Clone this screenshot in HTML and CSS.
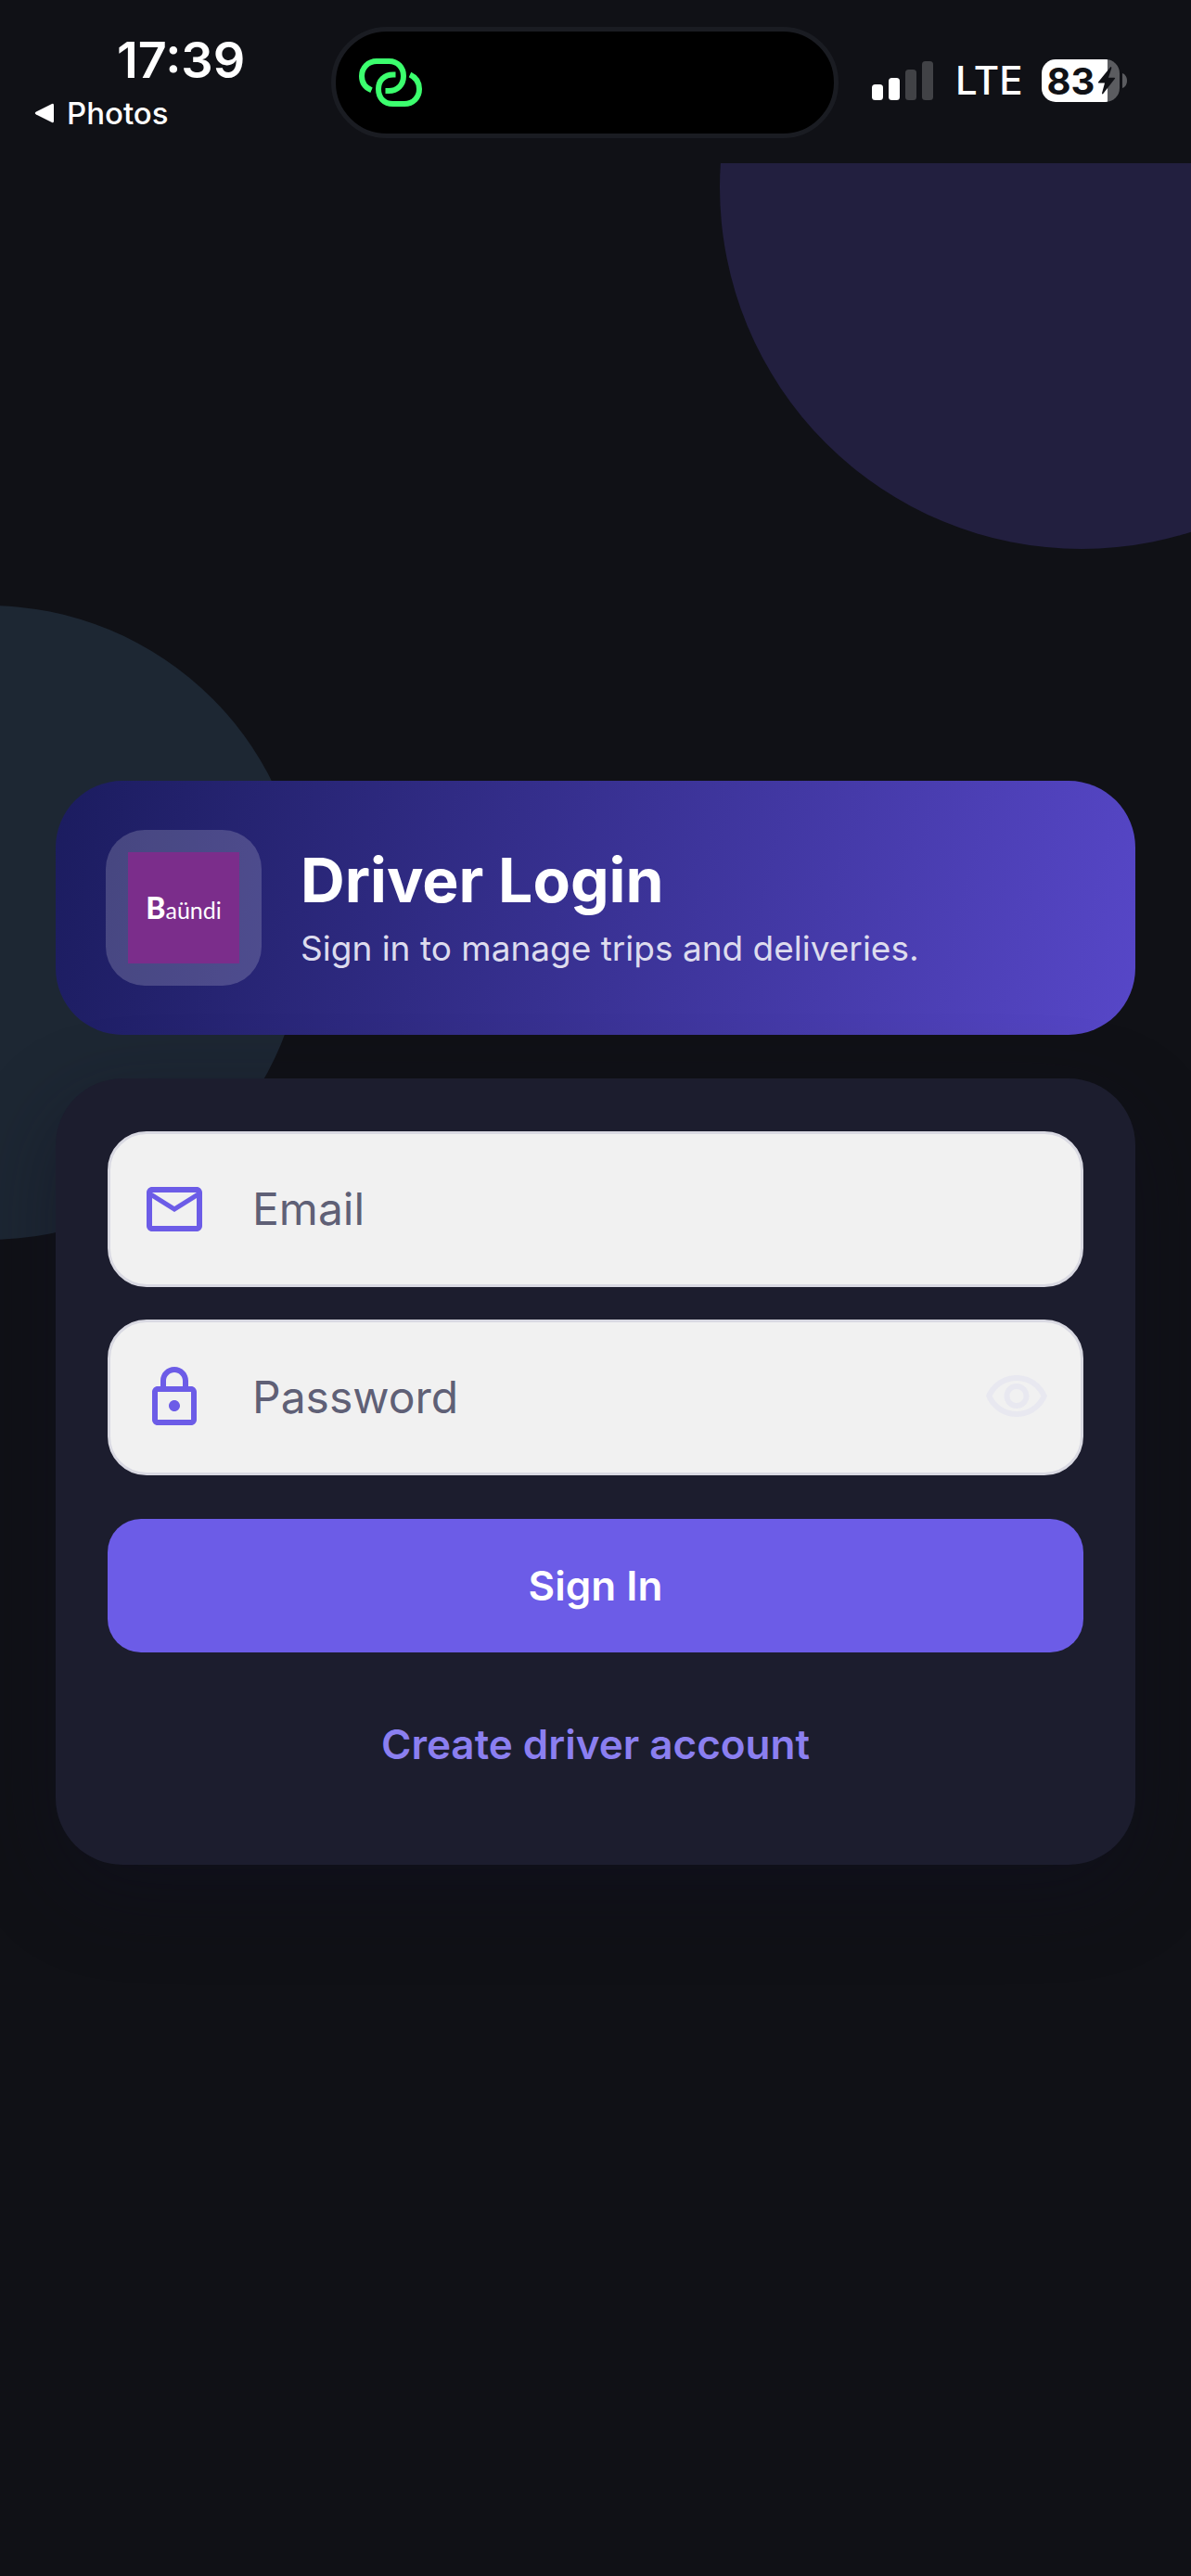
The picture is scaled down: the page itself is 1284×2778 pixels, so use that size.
FILE: index.html
```html
<!DOCTYPE html>
<html lang="en">
<head>
    <meta charset="UTF-8">
    <meta name="viewport" content="width=device-width, initial-scale=1.0">
    <title>Driver Login</title>
    <link rel="stylesheet" href="styles.css">
</head>
<body>
    <header class="status-bar">
        <div class="status-left">
            <div class="status-time">17:39</div>
            <a class="status-back" href="#">
                <svg width="24" height="24" viewBox="0 0 24 24"><path d="M3 10.500 20 2q2-1 2 1.500v17q0 2.500-2 1.500L3 13.500q-2.500-1.500 0-3z" fill="#fff"/></svg>
                Photos
            </a>
        </div>
        <div class="island">
            <svg width="68" height="52" viewBox="0 0 68 52" fill="none" stroke="#3cff6e" stroke-width="6">
                <path d="M13.500 34.300C7 31.500 3 26 3 19 3 10 10 3 19 3h13.500C42 3 48 10 48 19c0 9.500-6.500 16-16 16h-3.500"/>
                <path d="M39.500 17.500H37C27 17.500 21 24 21 33c0 9.500 6 16 15.500 16H49c9.500 0 16-7 16-16 0-7-3.500-12.500-10-15.500"/>
            </svg>
        </div>
        <div class="status-right">
            <svg width="66" height="42" viewBox="0 0 66 42">
                <rect x="0" y="25" width="12" height="17" rx="3.500" fill="#fff"/>
                <rect x="18" y="18" width="12" height="24" rx="3.500" fill="#fff"/>
                <rect x="36" y="9" width="12" height="33" rx="3.500" fill="#414246"/>
                <rect x="54" y="0" width="12" height="42" rx="3.500" fill="#414246"/>
            </svg>
            <span class="network">LTE</span>
            <div class="battery">
                <span class="battery-level">83</span>
                <svg class="bolt" width="20" height="30" viewBox="0 0 20 30"><path d="M14 .500 1 16.500q-.7 1 .6 1H8L5 28.500q0 1.700 1.300.6L19 12.800q.6-1-.6-1H12L15.300 1.500Q15.300-.6 14 .500z" fill="#101116"/></svg>
                <svg class="battery-cap" width="5" height="16" viewBox="0 0 5 16"><path d="M0 0c3 1 5 4 5 8s-2 7-5 8z" fill="#5b5c60"/></svg>
            </div>
        </div>
    </header>

    <main class="screen">
        <div class="circle circle-top"></div>
        <div class="circle circle-left"></div>

        <section class="hero">
            <div class="logo">
                <div class="logo-mark"><b>B</b>aündi</div>
            </div>
            <div class="hero-text">
                <h1>Driver Login</h1>
                <p>Sign in to manage trips and deliveries.</p>
            </div>
        </section>

        <form class="card">
            <label class="field">
                <svg class="icon" viewBox="0 0 24 24"><path d="M22 6c0-1.100-.9-2-2-2H4c-1.100 0-2 .9-2 2v12c0 1.100.9 2 2 2h16c1.100 0 2-.9 2-2V6zm-2 0l-8 5-8-5h16zm0 12H4V8l8 5 8-5v10z"/></svg>
                <input type="email" placeholder="Email" aria-label="Email">
            </label>
            <div class="field">
                <svg class="icon" viewBox="0 0 24 24"><path d="M18 8h-1V6c0-2.760-2.240-5-5-5S7 3.240 7 6v2H6c-1.100 0-2 .9-2 2v10c0 1.100.9 2 2 2h12c1.100 0 2-.9 2-2V10c0-1.100-.9-2-2-2zM9 6c0-1.660 1.340-3 3-3s3 1.340 3 3v2H9V6zm9 14H6V10h12v10zm-6-3c1.100 0 2-.9 2-2s-.9-2-2-2-2 .9-2 2 .9 2 2 2z"/></svg>
                <input type="password" placeholder="Password" aria-label="Password">
                <button class="toggle" type="button" aria-label="Show password">
                    <svg class="icon" viewBox="0 0 24 24"><path d="M12 6c3.790 0 7.170 2.130 8.820 5.500C19.170 14.870 15.790 17 12 17s-7.170-2.130-8.820-5.500C4.830 8.130 8.210 6 12 6m0-2C7 4 2.730 7.110 1 11.500 2.730 15.890 7 19 12 19s9.270-3.110 11-7.500C21.270 7.110 17 4 12 4zm0 5c1.380 0 2.500 1.120 2.500 2.500S13.380 14 12 14s-2.500-1.120-2.500-2.500S10.620 9 12 9m0-2c-2.480 0-4.500 2.020-4.500 4.500S9.520 16 12 16s4.500-2.020 4.500-4.500S14.480 7 12 7z"/></svg>
                </button>
            </div>
            <button class="btn-primary" type="submit">Sign In</button>
            <a class="btn-link" href="#">Create driver account</a>
        </form>
    </main>
</body>
</html>
```
FILE: styles.css
```css
* {
    margin: 0;
    padding: 0;
    box-sizing: border-box;
}

body {
    display: flex;
    flex-direction: column;
    min-height: 100vh;
    background: #101116;
    color: #ffffff;
    font-family: Inter, 'Liberation Sans', sans-serif;
}

svg {
    display: block;
    flex-shrink: 0;
}

a {
    text-decoration: none;
}

/* Status bar */
.status-bar {
    display: flex;
    align-items: flex-start;
    height: 176px;
}

.status-left {
    width: 357px;
    padding: 36px 36px 0;
}

.status-time {
    padding-left: 90px;
    font-size: 54px;
    font-weight: 600;
    line-height: 58px;
}

.status-back {
    display: flex;
    align-items: center;
    gap: 12px;
    margin-top: 8px;
    color: #ffffff;
    font-size: 33px;
    font-weight: 500;
    line-height: 40px;
}

.island {
    display: flex;
    align-items: center;
    flex-basis: 547px;
    height: 120px;
    margin-top: 29px;
    padding: 0 25px;
    background: #000000;
    border: 5px solid #1a1c22;
    border-radius: 60px;
}

.status-right {
    display: flex;
    align-items: center;
    flex: 1;
    padding: 60px 0 0 36px;
}

.network {
    margin-left: 24px;
    font-size: 42px;
    font-weight: 500;
    line-height: 54px;
}

.battery {
    position: relative;
    display: flex;
    align-items: center;
    width: 84px;
    height: 46px;
    margin-left: 20px;
    padding-left: 6px;
    border-radius: 15px;
    background: linear-gradient(90deg, #ffffff 84%, #5b5c60 84%);
}

.battery-level {
    color: #101116;
    font-size: 40px;
    font-weight: 700;
}

.bolt {
    position: absolute;
    right: 4px;
}

.battery-cap {
    position: absolute;
    right: -8px;
}

/* Login screen */
.screen {
    position: relative;
    display: flex;
    flex: 1;
    flex-direction: column;
    justify-content: center;
    gap: 47px;
    padding: 0 60px 102px;
    overflow: hidden;
}

.circle {
    position: absolute;
    border-radius: 50%;
}

.circle-top {
    top: -364px;
    right: -272px;
    width: 780px;
    height: 780px;
    background: #221f3f;
}

.circle-left {
    top: 477px;
    left: -355px;
    width: 684px;
    height: 684px;
    background: #1d2733;
}

.hero {
    position: relative;
    display: flex;
    align-items: center;
    gap: 42px;
    padding: 53px 54px;
    border-radius: 72px;
    background: linear-gradient(103deg, #1b1c5f, #5747c8);
}

.logo {
    padding: 24px;
    border-radius: 42px;
    background: rgba(255, 255, 255, 0.18);
}

.logo-mark {
    width: 120px;
    height: 120px;
    background: #7b2d8b;
    font-family: Lato, sans-serif;
    font-size: 25px;
    line-height: 120px;
    text-align: center;
}

.logo-mark b {
    font-size: 32px;
    font-weight: 900;
}

.hero h1 {
    font-size: 66px;
    font-weight: 700;
    line-height: 88px;
}

.hero p {
    color: #dddcee;
    font-size: 37px;
    line-height: 60px;
}

.card {
    position: relative;
    display: flex;
    flex-direction: column;
    padding: 57px 56px;
    border-radius: 72px;
    background: #1c1d2e;
    box-shadow: 0 30px 90px rgba(15, 15, 34, 0.45);
}

.field {
    display: flex;
    align-items: center;
    gap: 48px;
    height: 168px;
    margin-bottom: 35px;
    padding: 0 33px;
    border: 3px solid #d9d9e2;
    border-radius: 42px;
    background: #f1f1f1;
}

.icon {
    width: 72px;
    height: 72px;
    fill: #6c5ce7;
}

.field input {
    flex: 1;
    min-width: 0;
    border: none;
    outline: none;
    background: none;
    color: #1c1d2e;
    font-family: inherit;
    font-size: 48px;
}

.field input::placeholder {
    color: #5f6076;
    opacity: 1;
}

.toggle {
    border: none;
    background: none;
    cursor: pointer;
}

.toggle .icon {
    fill: #e8e8f0;
}

.btn-primary,
.btn-link {
    height: 144px;
    border-radius: 36px;
    font-family: inherit;
    font-size: 44px;
    font-weight: 600;
    line-height: 142px;
    text-align: center;
}

.btn-primary {
    margin-top: 12px;
    border: none;
    background: #6c5ce7;
    color: #ffffff;
    cursor: pointer;
}

.btn-link {
    margin-top: 28px;
    color: #8b7ff0;
}
```
